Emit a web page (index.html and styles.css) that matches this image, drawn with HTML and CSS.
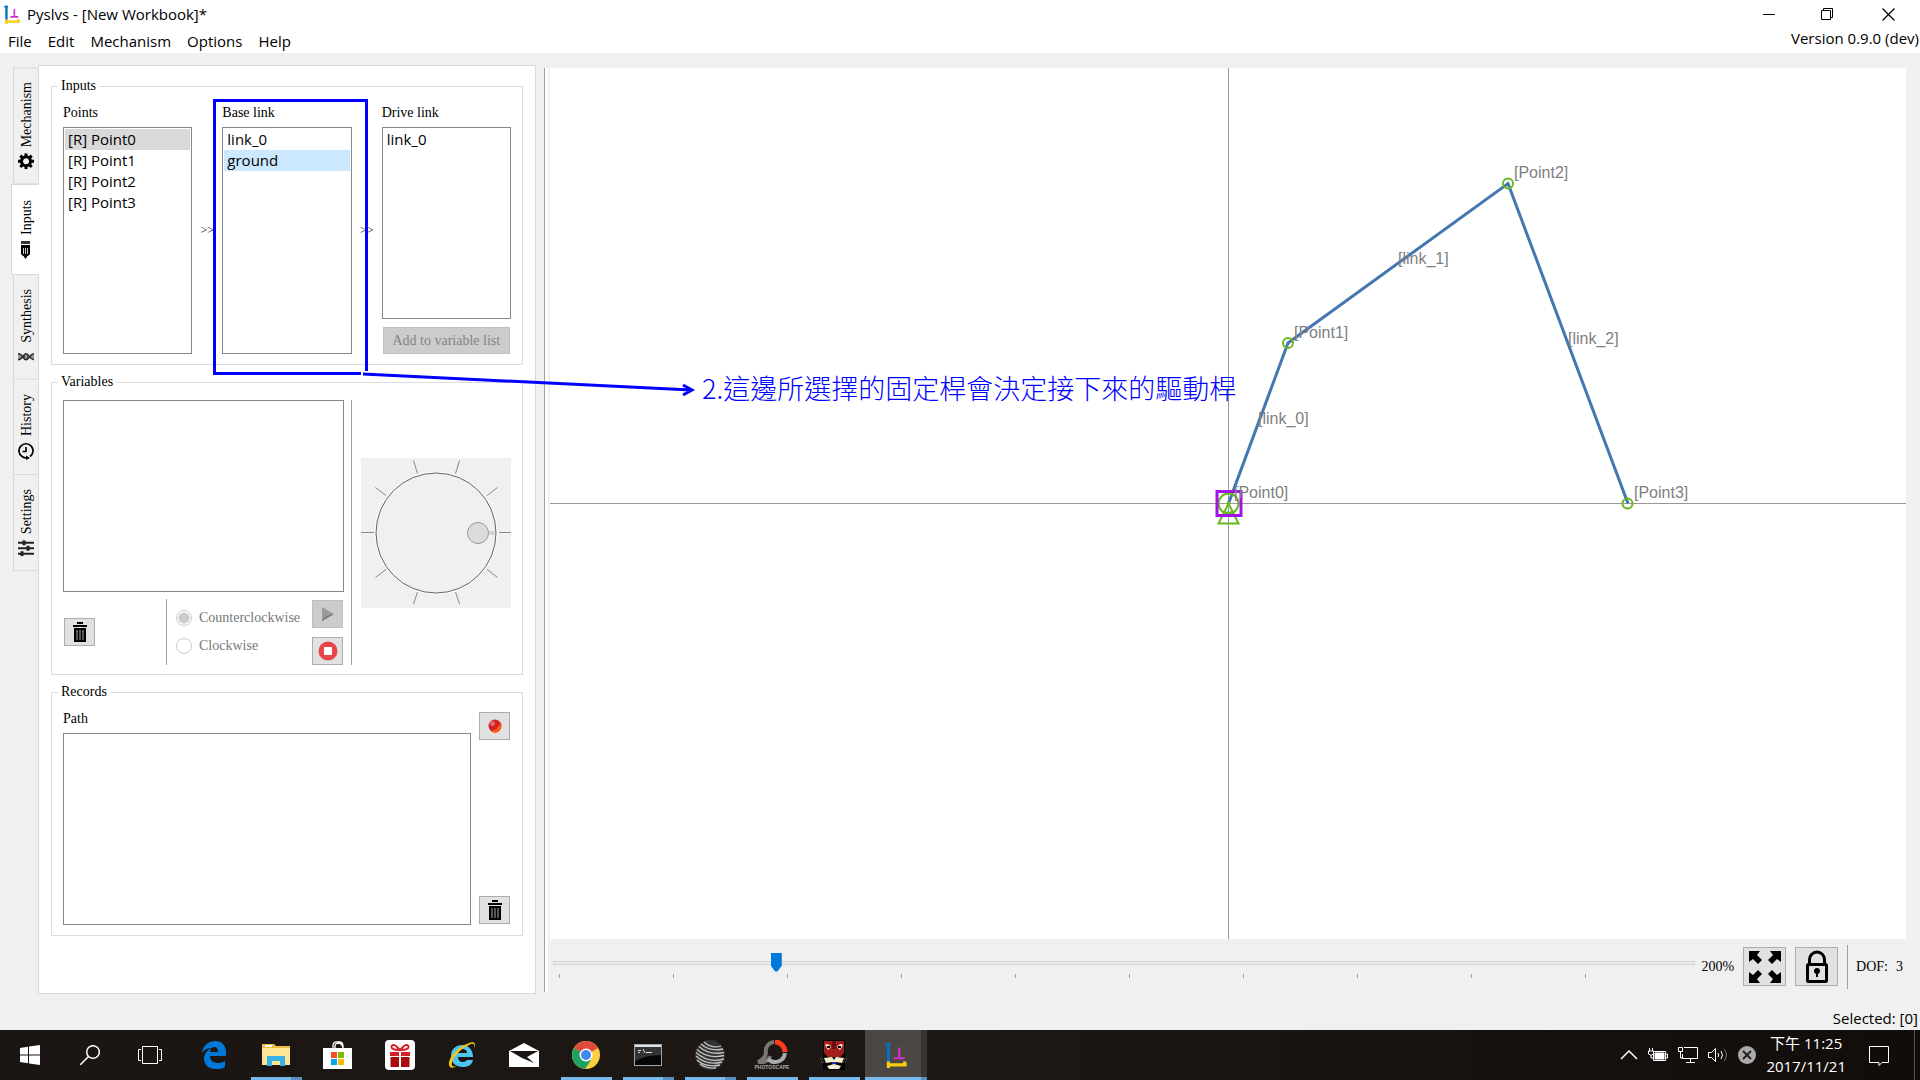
FILE: index.html
```html
<!DOCTYPE html>
<html lang="zh-Hant">
<head>
<meta charset="utf-8">
<title>Pyslvs - [New Workbook]*</title>
<link rel="stylesheet" href="styles.css">
</head>
<body>
<svg class="defs" aria-hidden="true">
  <symbol id="trash" viewBox="0 0 14 20">
    <path d="M5 2V1h4v1M1 4h12" fill="none" stroke="#000" stroke-width="2"/>
    <path d="M0 3h14v2H0zM1 6h12v14H1z" fill="#000"/>
    <path d="M4 8v10M7 8v10M10 8v10" stroke="#aaa" stroke-width="1"/>
  </symbol>
  <symbol id="logo" viewBox="0 0 20 24">
    <path d="M3 1v18" stroke="#0b6fc0" stroke-width="3"/>
    <path d="M0 2h5" stroke="#0b6fc0" stroke-width="2"/>
    <path d="M13 5v10M8 15h10" stroke="#d030c8" stroke-width="2"/>
    <path d="M2 21h18" stroke="#f6cf10" stroke-width="3"/>
    <path d="M3 18v6M18 18v4" stroke="#f6cf10" stroke-width="3"/>
  </symbol>
</svg>

<header class="head">
  <div class="titlebar">
    <svg class="app-icon"><use href="#logo"/></svg>
    <span class="title">Pyslvs - [New Workbook]*</span>
    <div class="winbtns">
      <button aria-label="Minimize"><svg width="13" height="13"><path d="M0 6.500h12" stroke="#000"/></svg></button>
      <button aria-label="Restore"><svg width="13" height="13"><path d="M.5 2.500h9v9h-9zM2.500 2.500v-2h9v9h-2" fill="none" stroke="#000"/></svg></button>
      <button aria-label="Close"><svg width="13" height="13"><path d="M.5.500l12 12M12.500.500l-12 12" stroke="#000" stroke-width="1.200"/></svg></button>
    </div>
  </div>
  <nav class="menubar">
    <button>File</button><button>Edit</button><button>Mechanism</button><button>Options</button><button>Help</button>
    <span class="version">Version 0.9.0 (dev)</span>
  </nav>
</header>

<main class="main">
  <div class="tabs" role="tablist">
    <button class="tab" role="tab"><svg width="16" height="16" viewBox="0 0 16 16"><circle cx="8" cy="8" r="4.500" fill="none" stroke="#000" stroke-width="3"/><path d="M8 0v3M8 13v3M0 8h3M13 8h3M2.300 2.300l2 2M11.700 11.700l2 2M13.700 2.300l-2 2M2.300 13.700l2-2" stroke="#000" stroke-width="3"/></svg>Mechanism</button>
    <button class="tab on" role="tab" aria-selected="true"><svg width="16" height="18" viewBox="0 0 16 18"><path d="M2 0h9v3H2z" fill="#333"/><path d="M2 4h9v9l-2 2H4l-2-2zM4.500 15h4l-2 3z" fill="#000"/><path d="M4.500 7v6M6.500 7v6M8.500 7v6" stroke="#ccc"/></svg>Inputs</button>
    <button class="tab" role="tab"><svg width="16" height="16" viewBox="0 0 16 16"><path d="M0 5C5 5 5 11 8 11s4-6 8-6M0 11c5 0 5-6 8-6s4 6 8 6" fill="none" stroke="#222" stroke-width="1.500"/><path d="M1 5v6M3 6v4M6.500 6v4M8 5v6M9.500 6v4M13 6v4M15 5v6" stroke="#444"/></svg>Synthesis</button>
    <button class="tab" role="tab"><svg width="16" height="18" viewBox="0 0 16 18"><path d="M12 14.500A7 7 0 1 0 4 14.500q2 1.500 5 1.500" fill="none" stroke="#000" stroke-width="1.700"/><path d="M8 5v4.500H4.500" fill="none" stroke="#000" stroke-width="1.600"/><path d="M8 13.500l4 2.500-4 2z"/></svg>History</button>
    <button class="tab" role="tab"><svg width="16" height="16" viewBox="0 0 16 16"><path d="M0 2.500h16M0 8h16M0 13.500h16" stroke="#222" stroke-width="2"/><path d="M6 0v5M10 5.500v5M4 11v5" stroke="#222" stroke-width="3"/></svg>Settings</button>
  </div>

  <section class="panel">
    <fieldset class="group">
      <legend>Inputs</legend>
      <div class="inputs">
        <div class="col">
          <span class="label">Points</span>
          <ul class="list tall"><li class="cur">[R] Point0</li><li>[R] Point1</li><li>[R] Point2</li><li>[R] Point3</li></ul>
        </div>
        <span class="sep">&gt;&gt;</span>
        <div class="col">
          <span class="label">Base link</span>
          <ul class="list tall"><li>link_0</li><li class="sel">ground</li></ul>
        </div>
        <span class="sep">&gt;&gt;</span>
        <div class="col">
          <span class="label">Drive link</span>
          <ul class="list short"><li>link_0</li></ul>
          <button class="btn wide" disabled>Add to variable list</button>
        </div>
      </div>
    </fieldset>

    <fieldset class="group">
      <legend>Variables</legend>
      <div class="variables">
        <div class="col">
          <ul class="list short"></ul>
          <div class="controls">
            <button class="btn" aria-label="Delete variable"><svg width="14" height="20"><use href="#trash"/></svg></button>
            <div class="direction">
              <div class="radios">
                <label><input type="radio" name="dir" checked disabled>Counterclockwise</label>
                <label><input type="radio" name="dir" disabled>Clockwise</label>
              </div>
              <div class="play">
                <button class="btn" disabled aria-label="Play"><svg width="12" height="14"><path d="M0 0l12 7-12 7z" fill="#999"/><path d="M0 13q5-5 11-6l1 0-12 7z" fill="#777"/></svg></button>
                <button class="btn" aria-label="Stop"><svg width="20" height="20"><circle cx="10" cy="10" r="9.500" fill="#e8464a"/><path d="M6 6h8v8H6z" fill="#fff"/></svg></button>
              </div>
            </div>
          </div>
        </div>
        <div class="dialbox">
          <svg width="150" height="150" viewBox="0 0 150 150" role="img" aria-label="Angle dial">
            <rect width="150" height="150" fill="#f0f0f0"/>
            <circle cx="75" cy="75" r="61" fill="none" stroke="#fff"/>
            <circle cx="75" cy="75" r="60" fill="#f0f0f0" stroke="#666"/>
            <path d="M0 74.500h13M138 74.500h12M52.500 2.500l4 13M98.500 2.500l-4 13M52.500 146l4-12M98.500 146l-4-12M14.500 29.500l10.500 8M136.500 29.500l-10.500 8M14.500 119.500l10.500-8M136.500 119.500l-10.500-8" stroke="#888" fill="none"/>
            <path d="M128 75h6" stroke="#d4d4d4" stroke-width="4"/>
            <circle cx="117" cy="75" r="10.500" fill="#dcdcdc" stroke="#999"/>
          </svg>
        </div>
      </div>
    </fieldset>

    <fieldset class="group">
      <legend>Records</legend>
      <div class="records">
        <div class="col">
          <span class="label">Path</span>
          <ul class="list short"></ul>
        </div>
        <div class="recbtns">
          <button class="btn" aria-label="Record"><svg width="14" height="14"><circle cx="7" cy="7" r="6.500" fill="#d32222"/><path d="M3 12q7-1 9-8 3 6-3 9.500-4 1-6-1.500z" fill="#ff5a1a"/><circle cx="4.500" cy="4.500" r="2.500" fill="#dd6a6a"/></svg></button>
          <button class="btn" aria-label="Delete record"><svg width="14" height="20"><use href="#trash"/></svg></button>
        </div>
      </div>
    </fieldset>
  </section>

  <div class="splitter"></div>

  <section class="work">
    <div class="canvas">
      <svg class="linkage" width="1" height="1">
        <g fill="none" stroke="#4477b0" stroke-width="3">
          <path d="M.5.500L60-160 280-319.500 400 .5"/>
        </g>
        <g fill="none" stroke="#69b91e" stroke-width="2">
          <circle cx="60" cy="-160" r="5"/><circle cx="280" cy="-319.500" r="5"/><circle cx="399.500" cy=".5" r="5"/>
          <circle cx=".5" cy=".5" r="10"/><circle cx=".5" cy=".5" r="1"/>
          <path d="M.5.500L-9.500 20.500h20zM-5 9.500H6"/>
        </g>
        <rect x="-11" y="-11.500" width="24" height="24" fill="none" stroke="#9f12e8" stroke-width="3"/>
        <g class="names">
          <text x="286" y="-325">[Point2]</text><text x="66" y="-165">[Point1]</text><text x="170" y="-239">[link_1]</text>
          <text x="340" y="-159">[link_2]</text><text x="30" y="-79">[link_0]</text><text x="6" y="-5">[Point0]</text><text x="406" y="-5">[Point3]</text>
        </g>
      </svg>
    </div>
    <div class="toolbar">
      <div class="zoom">
        <input type="range" min="10" max="1000" value="200" aria-label="Zoom">
        <div class="ticks"><i></i><i></i><i></i><i></i><i></i><i></i><i></i><i></i><i></i><i></i></div>
      </div>
      <span class="pct">200%</span>
      <button class="btn big" aria-label="Zoom to fit"><svg width="32" height="32"><path d="M0 0h11L8 4l5 5-4 4-5-5-4 3zM32 0v11l-4-3-5 5-4-4 5-5-3-4zM0 32V21l4 3 5-5 4 4-5 5 3 4zM32 32H21l3-4-5-5 4-4 5 5 4-3z"/></svg></button>
      <button class="btn big" aria-label="Lock"><svg width="22" height="34"><path d="M3.500 14V9.500a7.500 7.500 0 0 1 15 0V14" fill="none" stroke="#000" stroke-width="3"/><rect x="1.500" y="14.500" width="19" height="17" rx="1" fill="none" stroke="#000" stroke-width="3"/><circle cx="11" cy="21" r="3"/><path d="M10 21h2v6h-2z"/></svg></button>
      <span class="dof"><span>DOF:</span> <span>3</span></span>
    </div>
  </section>
</main>

<div class="status">Selected: [0]</div>

<footer class="taskbar">
  <div class="apps">
    <button class="sys" aria-label="Start"><svg width="20" height="20" fill="#fff"><path d="M0 3l8-1.200V9.500H0zM9 1.600L20 0v9.500H9zM0 10.500h8v7.700L0 17zM9 10.500h11V20L9 18.400z"/></svg></button>
    <button class="sys" aria-label="Search"><svg width="20" height="20" fill="none" stroke="#fff" stroke-width="1.500"><circle cx="13" cy="7" r="6.300"/><path d="M8.500 11.500L0 20"/></svg></button>
    <button class="sys" aria-label="Task View"><svg width="24" height="18" fill="none" stroke="#fff"><path d="M4.500.500h15v17h-15zM3 3.500H.5v11H3M21 3.500h2.500v11H21"/></svg></button>
    <button class="app" aria-label="Edge"><svg width="26" height="28"><path d="M1 12C2 4 8 0 14 0c8 0 12 6 11 15H9c0 5 4 7 8 7 3 0 5-1 7-2v6c-3 2-6 2-9 2C7 28 3 23 3 18c0-5 3-9 8-11C6 7 3 9 1 12zM9 11h8c0-3-1-5-4-5-2 0-4 2-4 5z" fill="#0078d7"/></svg></button>
    <button class="app run multi" aria-label="File Explorer"><svg width="28" height="24"><path d="M0 1h12l2 2h14v19H0z" fill="#e8bd45"/><path d="M0 5h28v17H0z" fill="#ffe594"/><path d="M3 2h7v2H3z" fill="#fff"/><path d="M5 13h18v10h-5v-5h-8v5H5z" fill="#3ab2e6"/></svg></button>
    <button class="app" aria-label="Store"><svg width="30" height="28"><path d="M10 8V5q0-5 5-4 5-1 5 4v3M12 8V5q0-3 4-3 4 1 4 6" fill="none" stroke="#fff" stroke-width="1.300"/><path d="M0 7h29v21H0z" fill="#fff"/><path d="M8 11h6v6H8z" fill="#f25022"/><path d="M15 11h6v6h-6z" fill="#7fba00"/><path d="M8 18h6v6H8z" fill="#00a4ef"/><path d="M15 18h6v6h-6z" fill="#ffb900"/></svg></button>
    <button class="app" aria-label="Gifts"><svg width="30" height="30"><rect width="30" height="30" rx="4" fill="#fff"/><path d="M5 12h9v4H5zM16 12h9v4h-9z" fill="#d61f26"/><path d="M5.500 17H14v10H5.500zM16 17h8.500v10H16z" fill="#a80c12"/><path d="M15 10Q6 10 6.500 6.500 8 2 15 10q7-8 8.500-3.500Q24 10 15 10z" fill="none" stroke="#d61f26" stroke-width="2"/></svg></button>
    <button class="app" aria-label="Internet Explorer"><svg width="30" height="28"><path d="M4 15C4 8 9 4 15 4c7 0 11 5 11 12H11c0 3 2 5 5 5 2 0 3-1 4-2h6c-1 5-5 7-10 7-7 0-12-4-12-11zm7-3h9c0-3-2-4-5-4-2 0-4 1-4 4z" fill="#4cc5f1"/><path d="M27 8c2-5 1-8-5-6C13 5 1 15 2 24c1 4 5 3 8 1-3 1-6 1-5-3C6 15 16 6 24 3c3-1 4 1 3 5z" fill="#f5c518"/></svg></button>
    <button class="app" aria-label="Mail"><svg width="30" height="24"><path d="M0 8l15-8 15 8v16H0z" fill="#fff"/><path d="M1 8h28L18 14l7 6-12-5z" fill="#1b1613"/></svg></button>
    <button class="app run" aria-label="Chrome"><svg width="28" height="28" viewBox="0 0 28 28"><circle cx="14" cy="14" r="14" fill="#fdcf40"/><path d="M14 14L1.900 7a14 14 0 0 1 24.200 0z" fill="#de4b3c"/><path d="M14 14L1.900 7A14 14 0 0 0 13 28l6-9z" fill="#1da261"/><circle cx="14" cy="14" r="6.500" fill="#fff"/><circle cx="14" cy="14" r="5" fill="#4587f3"/></svg></button>
    <button class="app run multi" aria-label="Command Prompt"><svg width="28" height="23"><rect x=".5" y=".5" width="27" height="21" fill="#060606" stroke="#9aa5ae"/><path d="M1 1h26v2H1z" fill="#dbe4ea"/><path d="M1 3h26v8Q12 11 1 17z" fill="#333"/><path d="M4 6.500h3M4 8.500h2M9 5l2 4M12 8.500h6" stroke="#ddd"/></svg></button>
    <button class="app run multi" aria-label="Eclipse"><svg width="30" height="30"><circle cx="15" cy="15" r="15" fill="#333"/><path d="M9 2q8 7 17 4M6 4q9 8 22 5M4 6.500q10 9 25 6M2 9.500q11 10 27 6M1 12.500q12 11 28 6.500M1 16q11 10 26 6M2 20q9 8 23 5M5 24q7 5 16 4" fill="none" stroke="#c4c4c4" stroke-width="1.300"/></svg></button>
    <button class="app run" aria-label="PhotoScape"><svg width="36" height="30"><path d="M20 2a9 9 0 0 0-8 11q-1 6-8 9h6q5-2 6-6" fill="none" stroke="#777" stroke-width="4"/><path d="M21 2a10 10 0 0 1 10 10" fill="none" stroke="#ff3b1a" stroke-width="5"/><path d="M31 13A10 10 0 0 1 14 19" fill="none" stroke="#aaa" stroke-width="4"/><text x="18" y="29" class="tiny">PHOTOSCAPE</text></svg></button>
    <button class="app run" aria-label="Tiger"><svg width="28" height="30"><path d="M3 0h22v30H3z" fill="#050505"/><path d="M4 1h20v12l-4 4h-12l-4-4z" fill="#a41f1c"/><path d="M13 1v8M15 1v8" stroke="#300" stroke-width="1"/><path d="M5 5q3-3 6 2l-3 3zM23 5q-3-3-6 2l3 3zM4 18l8-1 2 3 2-3 8 1-2 5-6-1-2 3-2-3-6 1zM7 26l7-2 7 2-2 3H9z" fill="#f6ecd0"/><path d="M7 7h3M18 7h3" stroke="#000" stroke-width="2"/><path d="M0 19h4M1 22h4M24 19h4M23 22h4" stroke="#777" stroke-dasharray="1 1"/><path d="M12 22h4v2h-4z" fill="#2227b8"/></svg></button>
    <button class="app run multi active" aria-label="Pyslvs"><svg width="22" height="26" viewBox="0 0 20 24"><use href="#logo" width="20" height="24"/></svg></button>
  </div>
  <div class="tray">
    <svg width="18" height="10" fill="none" stroke="#fff" stroke-width="1.500"><path d="M1 9l8-8 8 8"/></svg>
    <svg width="20" height="14" fill="none" stroke="#fff"><path d="M5.500 3.500h12v9h-12zM18 6h1.500v4H18"/><path d="M7 5h9v6H7z" fill="#fff"/><path d="M1.500 0v3M4.500 0v3M.5 3h5v3l-2 1h-1l-2-1zM3 7v3h3"/></svg>
    <svg width="20" height="16" fill="none" stroke="#fff"><path d="M6 .5h13.500v11H4.500V7M8 15.500h9M12.500 12v3M.5.500h4v4h-4zM2.500 5v6H5"/></svg>
    <svg width="20" height="16" fill="none" stroke="#fff"><path d="M.5 5.500h3l4-4v13l-4-4h-3z"/><path d="M10 6q1.500 2 0 4M13 4q3 4 0 8"/><path d="M16 2q5 6 0 12" stroke="#777"/></svg>
    <svg width="18" height="18"><circle cx="9" cy="9" r="9" fill="#aaa"/><path d="M5 5l8 8M13 5l-8 8" stroke="#222" stroke-width="2"/></svg>
    <div class="clock"><span>下午 11:25</span><span>2017/11/21</span></div>
    <svg class="note" width="20" height="20" fill="none" stroke="#fff"><path d="M.5.500h19v16H13l-3 3v-3H.5z"/></svg>
    <span class="desk"></span>
  </div>
</footer>

<svg class="markup" width="720" height="410" fill="none" stroke="#00f" stroke-width="3">
  <path d="M366.500 371V100.500h-152v273H361M363 374l328 16M683 385l9 5-9 5"/>
</svg>
<p class="remark">2.這邊所選擇的固定桿會決定接下來的驅動桿</p>
</body>
</html>
```
FILE: styles.css
```css
* { box-sizing: border-box; }
body {
  margin: 0; min-height: 100vh; position: relative;
  display: flex; flex-direction: column;
  background: #f0f0f0; color: #000;
  font: 14px/18px "Liberation Serif", serif;
}
button { font: inherit; color: inherit; margin: 0; padding: 0; border: 0; background: none; }
svg { display: block; flex: none; }
ul { list-style: none; margin: 0; padding: 0; }
.defs { position: absolute; width: 0; height: 0; }

.head { background: #fff; font: 15px/20px "Open Sans", sans-serif; }
.titlebar { display: flex; align-items: center; height: 28px; padding-left: 4px; }
.app-icon { width: 16px; height: 19px; }
.title { padding-left: 7px; }
.winbtns { display: flex; margin-left: auto; }
.winbtns button { width: 58px; height: 26px; display: grid; place-items: center; }
.winbtns button:last-child { width: 64px; }
.menubar { display: flex; gap: 16px; height: 25px; padding-left: 8px; line-height: 26px; }
.version { margin-left: auto; line-height: 20px; padding-right: 1px; }

.main { flex: 1; display: flex; padding: 12px 14px 0 11px; }
.tabs { width: 27px; padding-top: 2px; display: flex; flex-direction: column; }
.tab {
  writing-mode: vertical-rl; transform: rotate(180deg);
  display: flex; align-items: center; gap: 6px;
  width: 25px; margin-left: 2px; padding: 14px 1px 14px 0;
  border: 1px solid #d9d9d9; border-width: 1px 1px 0 0;
}
.tab svg { transform: rotate(180deg); }
.tab.on { width: 28px; margin: 0 -1px 0 0; padding: 15px 3px 15px 0; background: #fff; position: relative; z-index: 1; border-width: 1px 1px 1px 0; }
.tab:first-child { border-bottom-width: 1px; }
.panel { width: 498px; background: #fff; border: 1px solid #d9d9d9; padding: 12px; display: flex; flex-direction: column; gap: 9px; }
.group { margin: 0; min-width: 0; border: 1px solid #dcdcdc; padding: 10px 11px; }
.group legend { line-height: 16px; padding: 0 3px; margin-left: -5px; }
.col { display: flex; flex-direction: column; min-width: 0; }
.label { margin-bottom: 5px; }
.list { border: 1px solid #828790; background: #fff; padding: 1px; font: 15px/21px "Open Sans", sans-serif; }
.list li { padding-left: 3px; }
.cur { background: #d9d9d9; }
.sel { background: #cce8ff; }
.tall { height: 227px; }
.short { height: 192px; }
.inputs { display: grid; grid-template-columns: 1fr 30px 1fr 30px 1fr; }
.sep { align-self: center; text-align: center; font-size: 12px; padding-top: 2px; }

.btn { display: grid; place-items: center; width: 31px; height: 28px; background: #e1e1e1; border: 1px solid #adadad; }
.btn:disabled { background: #ccc; border-color: #bfbfbf; color: #838383; }
.btn.wide { width: auto; height: 27px; margin: 8px 1px 0; }
.btn.big { width: 43px; height: 39px; }

.variables { display: grid; grid-template-columns: 1fr 160px; gap: 7px; margin-bottom: -1px; }
.controls { display: flex; align-items: center; justify-content: space-between; padding: 7px 1px 0; }
.direction { display: flex; justify-content: space-between; width: 177px; border-left: 1px solid #a0a0a0; }
.radios { display: flex; flex-direction: column; gap: 10px; padding: 10px 0 0 9px; }
.radios label { display: flex; align-items: center; gap: 7px; color: #787878; }
.radios input { appearance: none; width: 16px; height: 16px; margin: 0; border: 1px solid #ccc; border-radius: 50%; background: #fff; }
.radios input:checked { background: radial-gradient(circle, #ccc 5px, #fff 6px); }
.play { display: flex; flex-direction: column; gap: 9px; padding-top: 1px; }
.dialbox { border-left: 1px solid #a0a0a0; display: grid; place-items: center end; }

.records { display: grid; grid-template-columns: 1fr 32px; gap: 8px; }
.recbtns { display: flex; flex-direction: column; justify-content: space-between; padding: 2px 0 1px; }

.splitter { width: 4px; margin: 3px 2px 2px 8px; border-left: 1px solid #a0a0a0; background: #fff; }
.work { flex: 1; min-width: 0; display: flex; flex-direction: column; padding-top: 3px; }
.canvas {
  flex: 1; position: relative; overflow: hidden;
  background: linear-gradient(#999, #999) 50% 0 / 1px 100% no-repeat, linear-gradient(#999, #999) 0 50% / 100% 1px no-repeat, #fff;
}
.linkage { position: absolute; left: 50%; top: calc(50% - 1px); overflow: visible; }
.names { font: 16px "Liberation Sans", sans-serif; fill: #808080; }
.toolbar { display: flex; align-items: center; height: 55px; padding: 0 3px; }
.zoom { flex: 1; align-self: stretch; padding-top: 14px; }
.zoom input { appearance: none; display: block; width: 100%; height: 19px; margin: 0; background: none; }
.zoom input::-webkit-slider-runnable-track { height: 4px; background: #e7eaea; border: 1px solid #d6d6d6; }
.zoom input::-webkit-slider-thumb { appearance: none; width: 11px; height: 19px; margin-top: -9px; background: #0078d7; clip-path: polygon(0 0, 100% 0, 100% 70%, 60% 100%, 40% 100%, 0 70%); }
.ticks { display: flex; justify-content: space-between; margin: 2px 109px 0 6px; }
.ticks i { width: 1px; height: 4px; background: #a0a090; }
.pct { padding: 0 9px 0 6px; }
.btn.big + .btn.big { margin-left: 9px; }
.dof { display: flex; gap: 8px; margin-left: 9px; padding-left: 8px; border-left: 1px solid #a0a0a0; line-height: 44px; }
.status { height: 36px; text-align: right; padding: 14px 2px 0 0; font: 15px/20px "Open Sans", sans-serif; }

.taskbar { display: flex; justify-content: space-between; height: 50px; background: linear-gradient(90deg, #1b1613, #1d1814 50%, #120d0b); color: #fff; }
.apps { display: flex; }
.apps button { display: grid; place-items: center; position: relative; }
.sys { width: 60px; }
.app { width: 62px; }
.sys + .app { margin-left: 3px; }
.run::after { content: ""; position: absolute; left: 6px; right: 5px; bottom: 0; height: 3px; background: #76b9ed; }
.multi::after { background: linear-gradient(90deg, #76b9ed 40px, #5a8fbe 40px); }
.active { background: linear-gradient(90deg, #4a4744 56px, #393532 56px); }
.active::after { left: 0; right: 0; background: linear-gradient(90deg, #76b9ed 56px, #5a8fbe 56px); }
.tiny { font: bold 5px "Liberation Sans", sans-serif; fill: #aaa; text-anchor: middle; }
.tray { display: flex; align-items: center; gap: 10px; }
.clock { display: flex; flex-direction: column; align-items: center; font: 15px/23px "Open Sans", "Noto Sans CJK TC", sans-serif; padding-right: 13px; }
.note { margin-top: 2px; }
.desk { width: 6px; align-self: stretch; border-left: 1px solid #555; margin-left: 15px; }

.markup { position: absolute; left: 0; top: 0; pointer-events: none; }
.remark { position: absolute; left: 702px; top: 369px; margin: 0; color: #00f; font: 300 27px/38px "Noto Sans CJK TC", sans-serif; white-space: nowrap; }
```
